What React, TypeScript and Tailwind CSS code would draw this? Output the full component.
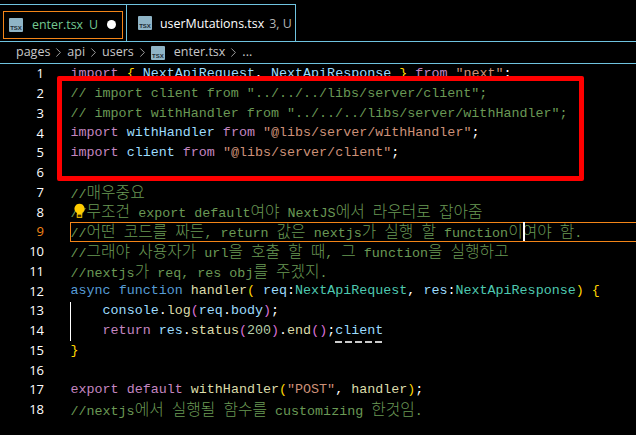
import React from "react";
import { ChevronRight } from "lucide-react";

const com = "text-[#6A9955]";
const kw = "text-[#C586C0]";
const blue = "text-[#569CD6]";
const vr = "text-[#9CDCFE]";
const fn = "text-[#DCDCAA]";
const str = "text-[#CE9178]";
const ty = "text-[#4EC9B0]";
const num = "text-[#B5CEA8]";
const wh = "text-white";
const yel = "text-[#FFD700]";
const pur = "text-[#DA70D6]";

type Tok = [string, string];

const lines: Tok[][] = [
  [["import", kw], [" ", wh], ["{", yel], [" ", wh], ["NextApiRequest", vr], [", ", wh], ["NextApiResponse", vr], [" ", wh], ["}", yel], [" ", wh], ["from", kw], [" ", wh], ['"next"', str], [";", wh]],
  [['// import client from "../../../libs/server/client";', com]],
  [['// import withHandler from "../../../libs/server/withHandler";', com]],
  [["import", kw], [" ", wh], ["withHandler", vr], [" ", wh], ["from", kw], [" ", wh], ['"@libs/server/withHandler"', str], [";", wh]],
  [["import", kw], [" ", wh], ["client", vr], [" ", wh], ["from", kw], [" ", wh], ['"@libs/server/client"', str], [";", wh]],
  [],
  [["//매우중요", com]],
  [["//무조건 export default여야 NextJS에서 라우터로 잡아줌", com]],
  [["//어떤 코드를 짜든, return 값은 nextjs가 실행 할 function이여야 함.", com]],
  [["//그래야 사용자가 url을 호출 할 때, 그 function을 실행하고", com]],
  [["//nextjs가 req, res obj를 주겠지.", com]],
  [["async", blue], [" ", wh], ["function", blue], [" ", wh], ["handler", fn], ["(", yel], [" ", wh], ["req", vr], [":", wh], ["NextApiRequest", ty], [", ", wh], ["res", vr], [":", wh], ["NextApiResponse", ty], [")", yel], [" ", wh], ["{", yel]],
  [["    ", wh], ["console", vr], [".", wh], ["log", fn], ["(", pur], ["req", vr], [".", wh], ["body", vr], [")", pur], [";", wh]],
  [["    ", wh], ["return", kw], [" ", wh], ["res", vr], [".", wh], ["status", fn], ["(", pur], ["200", num], [")", pur], [".", wh], ["end", fn], ["(", pur], [")", pur], [";", wh], ["client", vr]],
  [["}", yel]],
  [],
  [["export", kw], [" ", wh], ["default", kw], [" ", wh], ["withHandler", fn], ["(", yel], ['"POST"', str], [", ", wh], ["handler", fn], [")", yel], [";", wh]],
  [["//nextjs에서 실행될 함수를 customizing 한것임.", com]],
];

// hangul needs its own size, the mono font has no glyphs for it
function Ko({ text }: { text: string }) {
  const parts = text.split(/([가-힣]+)/);
  return (
    <>
      {parts.map((p, i) =>
        /[가-힣]/.test(p) ? (
          <span key={i} className="font-['Noto_Sans_CJK_KR',sans-serif] text-[15.8px] font-light leading-none">
            {p}
          </span>
        ) : (
          <span key={i}>{p}</span>
        ),
      )}
    </>
  );
}

function TsxIcon() {
  return (
    <span className="flex h-[14px] w-[14px] shrink-0 items-end justify-center rounded-[1px] bg-[#8fb4c6] pb-[1px] font-['Liberation_Sans',sans-serif] text-[6px] font-bold leading-none text-[#1c2b33]">
      TSX
    </span>
  );
}

function Sep() {
  return (
    <span className="flex w-[17px] shrink-0 justify-center">
      <ChevronRight size={15} strokeWidth={1.25} />
    </span>
  );
}

export default function App() {
  return (
    <div className="h-[435px] w-[636px] overflow-hidden bg-black font-['Open_Sans',sans-serif]">
      {/* TABS */}
      <div className="h-[41px] pt-[4px]">
        <div className="flex h-[37px] w-[296px] border-t border-[#6FC3DF]">
          <div className="flex h-full w-[127px] items-center border-r border-[#6FC3DF] pl-[3px] pt-[3px]">
            <div className="flex h-[28px] w-[120px] items-center whitespace-nowrap border border-[#F38518] pl-[5px] text-[12.4px] text-[#73C991]">
              <TsxIcon />
              <span className="ml-[9px] pt-[2px]">enter.tsx</span>
              <span className="ml-[6px] pt-[2px]">U</span>
              <span className="ml-[9px] h-[9px] w-[9px] rounded-full bg-white" />
            </div>
          </div>
          <div className="flex h-full flex-1 items-center whitespace-nowrap border-r border-[#6FC3DF] pl-[11px] text-[12.4px] text-white">
            <TsxIcon />
            <span className="ml-[8px] pt-[2px]">userMutations.tsx</span>
            <span className="ml-[5px] pt-[2px] text-[#b5b5b5]">3, U</span>
          </div>
        </div>
      </div>

      {/* BREADCRUMB */}
      <div className="flex h-[23px] items-center border-y border-[#6FC3DF] pl-[16px] text-[12.5px] text-[#c8c8c8]">
        <span>pages</span>
        <Sep />
        <span>api</span>
        <Sep />
        <span>users</span>
        <Sep />
        <TsxIcon />
        <span className="ml-[9px]">enter.tsx</span>
        <Sep />
        <span>...</span>
      </div>

      {/* EDITOR */}
      <div className="relative font-['Liberation_Mono',monospace] text-[13.36px]">
        {lines.map((toks, i) => (
          <div key={i} className="flex h-[19.75px] items-center whitespace-pre leading-none">
            <span className={`w-[44px] shrink-0 text-right font-['Open_Sans',sans-serif] text-[13px] ${i === 8 ? "text-[#F38518]" : "text-white"}`}>
              {i + 1}
            </span>
            <div className={`ml-[26px] flex h-full flex-1 items-center pl-[0.5px] ${i === 8 ? "-mr-[2px] outline outline-[#F38518] -outline-offset-1" : ""}`}>
              <span>
                {toks.map(([t, c], j) => (
                  <span key={j} className={c}>
                    <Ko text={t} />
                  </span>
                ))}
              </span>
            </div>
          </div>
        ))}

        {/* indent guide */}
        <div className="absolute left-[70px] top-[238px] h-[39px] w-px bg-white" />
        {/* problem squiggle under client */}
        <div className="absolute left-[335px] top-[277px] flex w-[47px] justify-between">
          <span className="h-[2px] w-[7px] bg-[#cccccc]" />
          <span className="h-[2px] w-[7px] bg-[#cccccc]" />
          <span className="h-[2px] w-[7px] bg-[#cccccc]" />
          <span className="h-[2px] w-[7px] bg-[#cccccc]" />
          <span className="h-[2px] w-[7px] bg-[#cccccc]" />
        </div>
        {/* cursor */}
        <div className="absolute left-[523px] top-[158px] h-[19px] w-[2px] bg-white" />
        {/* lightbulb */}
        <svg className="absolute left-[74px] top-[139px]" width="11" height="15" viewBox="0 0 12 16">
          <path d="M6 0.5a5.5 5.5 0 0 0-3.4 9.8c.6.5.9 1.1.9 1.7h5c0-.6.3-1.2.9-1.7A5.5 5.5 0 0 0 6 .5z" fill="#FFCC00" />
          <rect x="3.5" y="12" width="5" height="3.5" fill="#3a2a00" stroke="#FFCC00" strokeWidth="1" />
        </svg>
        {/* red annotation box drawn over the screenshot */}
        <div className="absolute left-[57px] top-[12px] h-[105px] w-[527px] rounded-[2px] border-[5px] border-[#FF0000]" />
      </div>
    </div>
  );
}
